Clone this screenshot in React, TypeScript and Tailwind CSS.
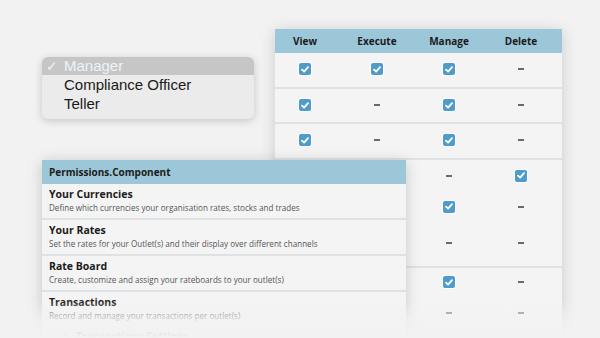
import React from "react";

const Check = () => (
  <div className="w-[12px] h-[12px] rounded-[2px] bg-[#4f9bca] ring-1 ring-white flex items-center justify-center">
    <svg width="8" height="7" viewBox="0 0 8 7">
      <path d="M1 3.6 L3.1 5.6 L7 1.2" fill="none" stroke="white" strokeWidth="1.8" strokeLinecap="round" strokeLinejoin="round" />
    </svg>
  </div>
);

const Dash = () => <div className="w-[6px] h-[2px] bg-[#6a6a6a]" />;

type Cell = "c" | "d" | "";

const Row = ({ cells, h, border = true }: { cells: Cell[]; h: string; border?: boolean }) => (
  <div className={`flex ${h} ${border ? "border-b-2 border-[#dfe2e4]" : ""}`}>
    {cells.map((c, i) => (
      <div key={i} className="w-[72px] flex justify-center pt-[10px]">
        <div className="h-[12px] flex items-center">
          {c === "c" ? <Check /> : c === "d" ? <Dash /> : null}
        </div>
      </div>
    ))}
  </div>
);

const SubRow = ({ cells, h }: { cells: Cell[]; h: string }) => (
  <div className={`flex ${h}`}>
    {cells.map((c, i) => (
      <div key={i} className="w-[72px] flex justify-center items-center">
        {c === "c" ? <Check /> : c === "d" ? <Dash /> : null}
      </div>
    ))}
  </div>
);

const perms = [
  { t: "Your Currencies", d: "Define which currencies your organisation rates, stocks and trades" },
  { t: "Your Rates", d: "Set the rates for your Outlet(s) and their display over different channels" },
  { t: "Rate Board", d: "Create, customize and assign your rateboards to your outlet(s)" },
  { t: "Transactions", d: "Record and manage your transactions per outlet(s)" },
];

export default function App() {
  return (
    <div className="relative w-[600px] h-[338px] overflow-hidden bg-[#f2f2f2]" style={{ fontFamily: '"Open Sans", sans-serif' }}>
      {/* Table panel */}
      <div className="absolute left-[275px] top-[29px] w-[287px] h-[340px] bg-[#f4f4f4] shadow-[0_2px_14px_rgba(0,0,0,0.16)] overflow-hidden">
        <div className="-ml-[6px] flex flex-col">
          <div className="flex h-[24px] bg-[#9cc7d8] items-center text-[10px] font-bold text-[#1b1b1b] pl-[6px] -ml-[6px]">
            {["View", "Execute", "Manage", "Delete"].map((h) => (
              <div key={h} className="w-[72px] text-center">{h}</div>
            ))}
          </div>
          <Row cells={["c", "c", "c", "d"]} h="h-[36px]" />
          <Row cells={["c", "d", "c", "d"]} h="h-[35px]" />
          <Row cells={["c", "d", "c", "d"]} h="h-[36px]" />
          <div className="flex flex-col border-b-2 border-[#dfe2e4] h-[108px]">
            <SubRow cells={["", "", "d", "c"]} h="h-[31px]" />
            <SubRow cells={["", "", "c", "d"]} h="h-[31px]" />
            <SubRow cells={["", "", "d", "d"]} h="h-[42px]" />
          </div>
          <SubRow cells={["", "", "c", "d"]} h="h-[28px]" />
          <SubRow cells={["", "", "d", "d"]} h="h-[34px]" />
        </div>
      </div>

      {/* Permissions panel */}
      <div className="absolute left-[42px] top-[160px] w-[364px] h-[200px] bg-[#f4f4f4] shadow-[0_2px_14px_rgba(0,0,0,0.18)]">
        <div className="h-[24px] bg-[#9cc7d8] flex items-center pl-[7px] text-[10px] font-bold text-[#1b1b1b]">
          Permissions.Component
        </div>
        {perms.map((p, i) => (
          <div key={p.t} className={`h-[36px] pl-[7px] pt-[3px] ${i < 3 ? "border-b-2 border-[#dfe2e4]" : ""}`}>
            <div className="text-[10.5px] leading-[14px] font-bold text-[#1b1b1b]">{p.t}</div>
            <div className="mt-[1px] text-[8.1px] leading-[12px] text-[#555]">{p.d}</div>
          </div>
        ))}
        <div className="pl-[21px] pt-[1px] flex items-center gap-[4px] text-[10.5px] leading-[14px] text-[#1b1b1b]">
          <span>↳</span>
          <span className="font-bold">Transactions Settings</span>
        </div>
      </div>

      {/* Dropdown menu */}
      <div
        className="absolute left-[42px] top-[57px] w-[212px] h-[62px] rounded-[6px] bg-[#ebebeb] shadow-[0_2px_8px_rgba(0,0,0,0.18)] overflow-hidden text-[15px] text-[#1a1a1a]"
        style={{ fontFamily: '"Liberation Sans", Arial, sans-serif' }}
      >
        <div className="h-[18px] bg-[#c6c6c6] flex items-center text-[#eaf4f9]">
          <span className="w-[22px] pl-[4px] text-[14px] leading-[16px] font-bold" style={{ fontFamily: '"DejaVu Sans", sans-serif' }}>✓</span>
          <span>Manager</span>
        </div>
        <div className="h-[20px] flex items-center pl-[22px]">Compliance Officer</div>
        <div className="h-[19px] flex items-center pl-[22px]">Teller</div>
      </div>

      {/* Bottom fade */}
      <div className="absolute left-0 right-0 top-[300px] h-[38px] bg-linear-to-b from-[#f2f2f2]/0 via-[#f2f2f2]/75 to-[#f2f2f2]" />
    </div>
  );
}
